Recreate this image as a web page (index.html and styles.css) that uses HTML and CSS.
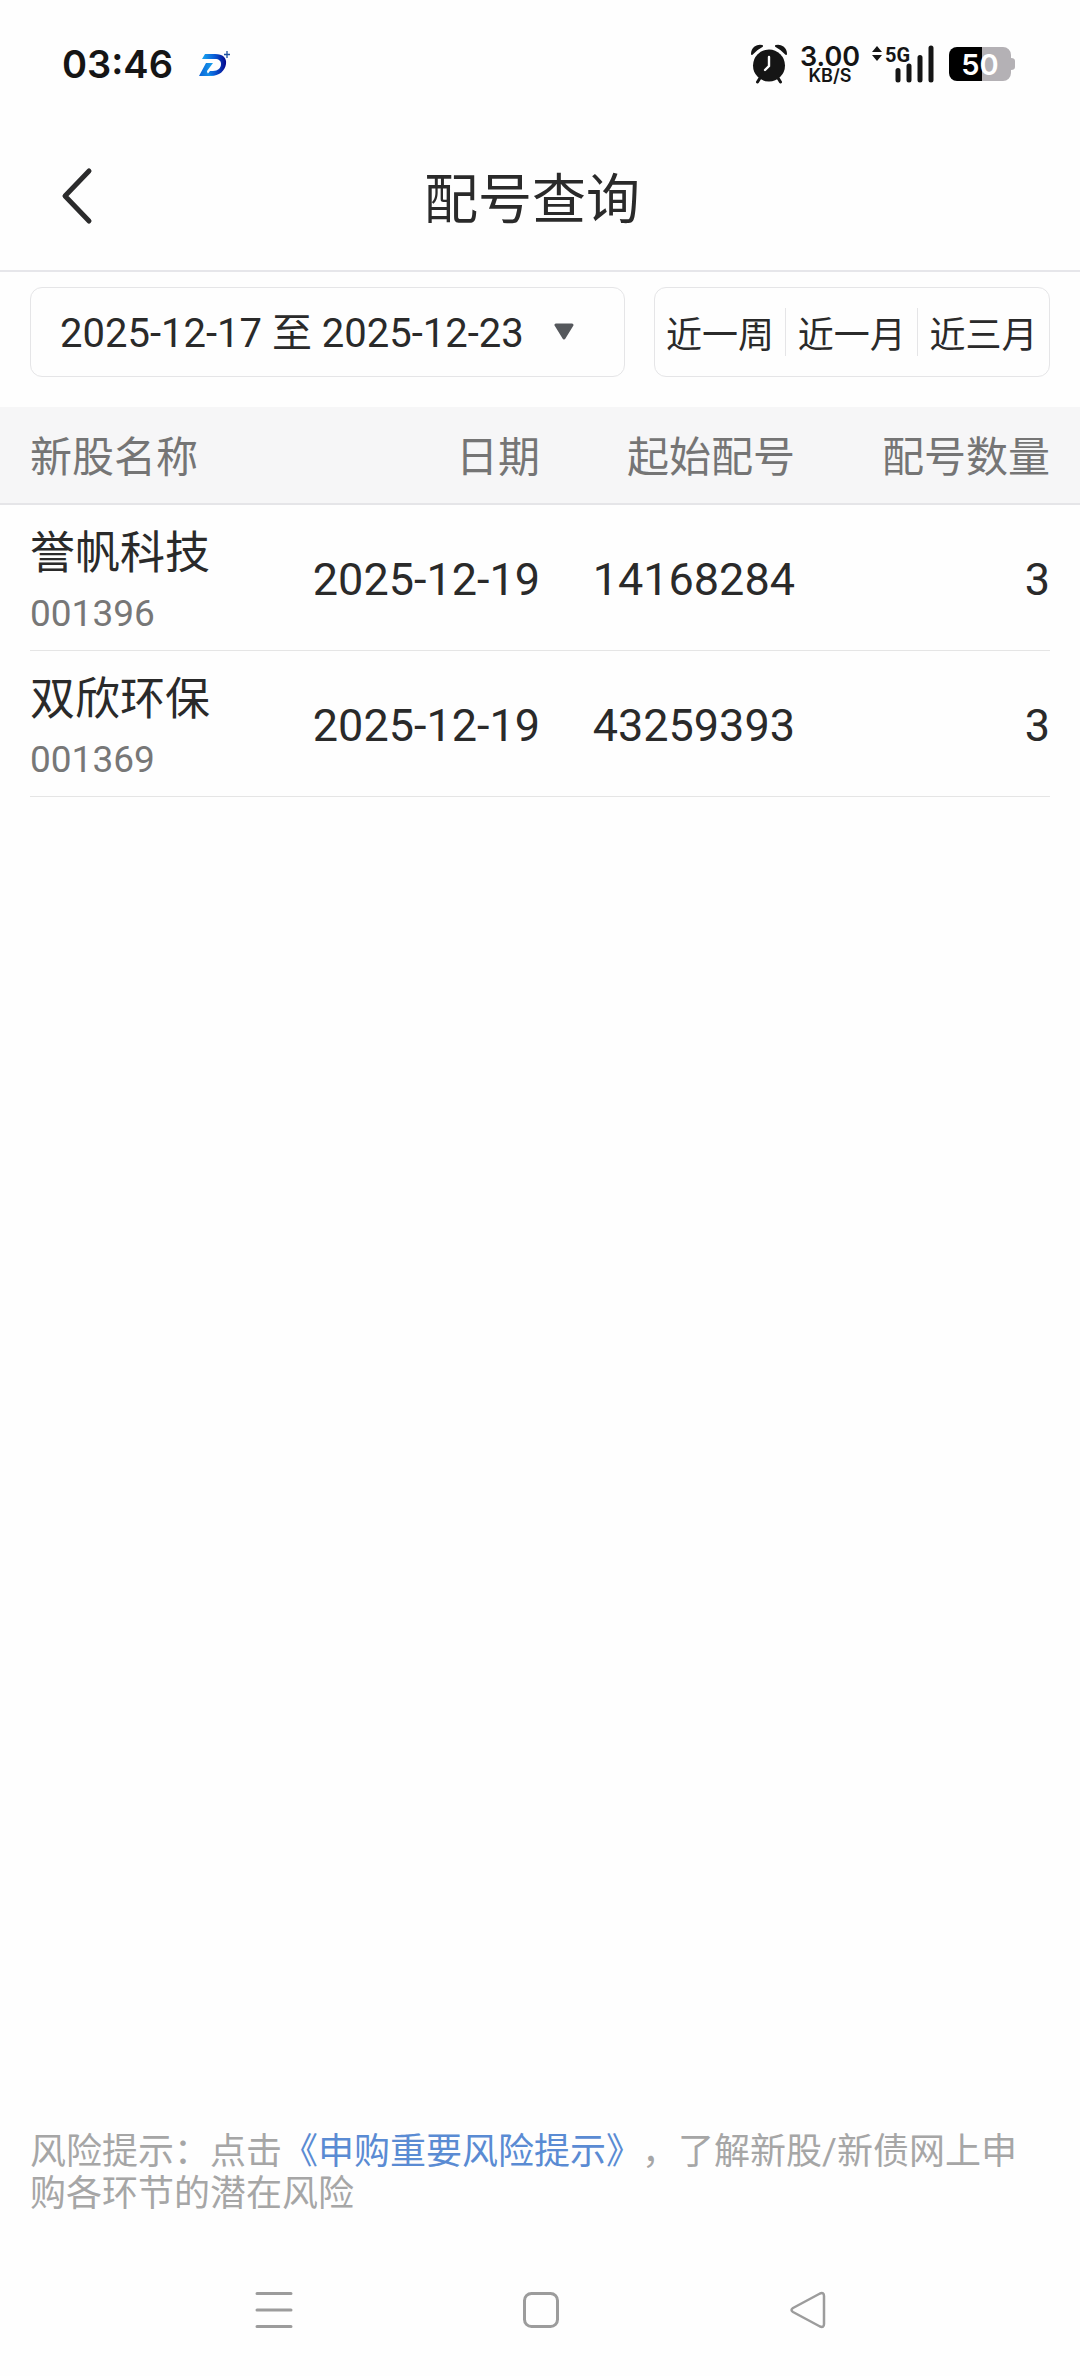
FILE: index.html
```html
<!DOCTYPE html>
<html lang="zh-CN">
<head>
<meta charset="utf-8">
<meta name="viewport" content="width=device-width, initial-scale=1">
<title>配号查询</title>
<link rel="stylesheet" href="styles.css">
</head>
<body>
<div class="screen">
  <div class="status">
    <span class="clock">03:46</span>
    <svg class="app-logo" width="34" height="34" viewBox="0 0 34 34" aria-hidden="true">
      <defs>
        <linearGradient id="logo-top" x1="0" x2="1"><stop offset="0" stop-color="#1aa7f0"/><stop offset=".5" stop-color="#0a5fd8"/><stop offset="1" stop-color="#05058c"/></linearGradient>
        <linearGradient id="logo-leg" x1="0" x2="1"><stop offset="0" stop-color="#0b62d8"/><stop offset="1" stop-color="#18a4ee"/></linearGradient>
      </defs>
      <path d="M7 7H17C25 7 29 11 28 17C27 24 21 29 13 29H8L12 24H15C20 24 23 21 23 17C23 14 21 12 17 12H4Z" fill="url(#logo-top)"/>
      <path d="M8 16H15L9 24C9 27 12 28 16 29H1Z" fill="url(#logo-leg)"/>
      <path d="M29 4V11M26 7.500H32" stroke="#1c50a0" stroke-width="1.300"/>
    </svg>
    <div class="status-right">
      <svg width="38" height="40" viewBox="0 0 38 40" aria-hidden="true">
        <circle cx="19" cy="21.500" r="16" fill="#151515"/>
        <path d="M2 10C2 4 7 1 12 2C8 4 5 6 2 10ZM36 10C36 4 31 1 26 2C30 4 33 6 36 10Z" fill="#151515" stroke="#151515" stroke-width="2" stroke-linejoin="round"/>
        <path d="M10 34L7.500 38M28 34L30.500 38" stroke="#151515" stroke-width="3" stroke-linecap="round"/>
        <path d="M19 13V22L15 26" fill="none" stroke="#fefefe" stroke-width="2.400" stroke-linecap="round"/>
      </svg>
      <div class="speed"><span class="speed-value">3.00</span><span class="speed-unit">KB/S</span></div>
      <svg class="signal" width="64" height="40" viewBox="0 0 64 40" role="img" aria-label="5G">
        <path d="M0 8L5 2L10 8ZM0 11L5 17L10 11Z" fill="#151515"/>
        <text x="13" y="18" class="signal-text">5G</text>
        <path d="M26 26.500V36M37 22V36M48 13.500V36M59 4V36" stroke="#151515" stroke-width="5" stroke-linecap="round"/>
      </svg>
      <svg width="68" height="36" viewBox="0 0 68 36" role="img" aria-label="50%">
        <path d="M34 1H55A8 8 0 0 1 63 9V12Q67 12 67 15V21Q67 24 63 24V27A8 8 0 0 1 55 35H34Z" fill="#b4b1b5"/>
        <path d="M34 1H9A8 8 0 0 0 1 9V27A8 8 0 0 0 9 35H34Z" fill="#000"/>
        <text x="32" y="29" text-anchor="middle" class="battery-text">50</text>
      </svg>
    </div>
  </div>

  <header class="header">
    <button class="back" type="button" aria-label="返回">
      <svg width="34" height="60" viewBox="0 0 34 60" aria-hidden="true"><path d="M29 5L5 30L29 55" fill="none" stroke="#2b2b2c" stroke-width="5" stroke-linecap="round" stroke-linejoin="round"/></svg>
    </button>
    <h1 class="title">配号查询</h1>
  </header>

  <main class="main">
    <div class="filters">
      <button class="range" type="button">
        <span class="range-text">2025-12-17 至 2025-12-23</span>
        <svg width="20" height="18" viewBox="0 0 20 18" aria-hidden="true"><path d="M2 2H18L10 15Z" fill="#55585c" stroke="#55585c" stroke-width="3" stroke-linejoin="round"/></svg>
      </button>
      <div class="quick">
        <button class="quick-item" type="button">近一周</button>
        <button class="quick-item" type="button">近一月</button>
        <button class="quick-item" type="button">近三月</button>
      </div>
    </div>

    <div class="table-wrap">
      <table class="table">
        <thead>
          <tr><th>新股名称</th><th>日期</th><th>起始配号</th><th>配号数量</th></tr>
        </thead>
        <tbody>
          <tr><td><span class="name">誉帆科技</span><span class="code">001396</span></td><td>2025-12-19</td><td>14168284</td><td>3</td></tr>
          <tr><td><span class="name">双欣环保</span><span class="code">001369</span></td><td>2025-12-19</td><td>43259393</td><td>3</td></tr>
        </tbody>
      </table>
    </div>
  </main>

  <p class="notice">风险提示：点击<a class="notice-link" href="#risk">《申购重要风险提示》</a>，了解新股/新债网上申购各环节的潜在风险</p>

  <nav class="sysnav">
    <button class="sys" type="button" aria-label="菜单"><svg width="40" height="40" viewBox="0 0 40 40" aria-hidden="true"><path d="M3 3.500H37M3 20H37M3 36.500H37" stroke="#9c9c9c" stroke-width="3" stroke-linecap="round"/></svg></button>
    <button class="sys" type="button" aria-label="主页"><svg width="40" height="40" viewBox="0 0 40 40" aria-hidden="true"><rect x="3.500" y="3.500" width="33" height="33" rx="7" fill="none" stroke="#9c9c9c" stroke-width="3"/></svg></button>
    <button class="sys" type="button" aria-label="后退"><svg width="40" height="40" viewBox="0 0 40 40" aria-hidden="true"><path d="M32 3.500L5 18Q2 20 5 22L32 36.500Q36 38 36 34V6Q36 2 32 3.500Z" fill="none" stroke="#9c9c9c" stroke-width="2.500" stroke-linejoin="round"/></svg></button>
  </nav>
</div>
</body>
</html>
```
FILE: styles.css
```css
* {
  box-sizing: border-box;
}

body {
  margin: 0;
  background: #fefefe;
  color: #2a2a2a;
  font-family: Roboto, "Noto Sans CJK SC", sans-serif;
}

button {
  margin: 0;
  padding: 0;
  border: 0;
  background: none;
  color: inherit;
  font: inherit;
}

svg {
  display: block;
  flex: none;
}

.screen {
  display: flex;
  flex-direction: column;
  min-height: 100vh;
}

/* Status bar */
.status {
  display: flex;
  align-items: center;
  height: 128px;
  padding: 0 64px 0 62px;
  color: #151515;
  font-family: Inter, sans-serif;
  font-weight: 600;
}

.clock {
  font-size: 38px;
  line-height: 48px;
}

.app-logo {
  margin-left: 25px;
}

.status-right {
  display: flex;
  align-items: center;
  gap: 12px;
  margin-left: auto;
}

.speed {
  display: flex;
  flex-direction: column;
  align-items: center;
}

.speed-value {
  font-size: 27px;
  line-height: 23px;
}

.speed-unit {
  font-size: 18px;
  line-height: 15px;
}

.signal-text {
  font: 700 20px Roboto, sans-serif;
  fill: #151515;
}

.battery-text {
  font: 600 29px Inter, sans-serif;
  fill: #fff;
}

/* Page header */
.header {
  display: grid;
  grid-template-columns: 120px 1fr 136px;
  align-items: center;
  height: 144px;
  border-bottom: 2px solid #e6e6ea;
}

.back {
  display: flex;
  align-items: center;
  height: 100%;
  padding: 0 0 6px 60px;
}

.title {
  margin: 0;
  padding-top: 4px;
  font-size: 54px;
  font-weight: 400;
  line-height: 72px;
  text-align: center;
}

/* Filters */
.main {
  flex: 1;
}

.filters {
  display: grid;
  grid-template-columns: minmax(0, 3fr) minmax(0, 2fr);
  gap: 29px;
  padding: 15px 30px 30px;
}

.range,
.quick {
  display: flex;
  align-items: center;
  height: 90px;
  border: 1px solid #e5e5e7;
  border-radius: 12px;
}

.range {
  gap: 30px;
  padding-left: 29px;
  font-size: 40px;
  white-space: nowrap;
}

.range-text {
  padding-bottom: 4px;
}

.quick-item {
  flex: 1;
  height: 48px;
  padding-top: 8px;
  font-size: 36px;
  line-height: 40px;
  white-space: nowrap;
}

.quick-item + .quick-item {
  border-left: 1px solid #e5e5e7;
}

/* Table */
.table-wrap {
  padding: 0 30px;
  background: linear-gradient(#f6f6f7 96px, #e5e5e8 96px, #e5e5e8 98px, transparent 98px);
}

.table {
  width: 100%;
  border-collapse: separate;
  border-spacing: 0;
  table-layout: fixed;
}

.table th {
  height: 98px;
  padding: 0 0 6px;
  color: #757575;
  font-size: 42px;
  font-weight: 400;
  text-align: right;
}

.table td {
  height: 146px;
  padding: 4px 0 0;
  border-bottom: 1px solid #e5e5e5;
  font-size: 45px;
  text-align: right;
}

.table th:first-child,
.table td:first-child {
  text-align: left;
}

.table td:first-child {
  padding-top: 9px;
}

.name,
.code {
  display: block;
}

.name {
  font-size: 45px;
  line-height: 64px;
}

.code {
  color: #777;
  font-size: 37px;
  line-height: 56px;
}

/* Risk notice */
.notice {
  margin: 0;
  padding: 0 30px 29px;
  color: #a6a6a6;
  font-size: 36px;
  line-height: 42px;
  text-spacing-trim: space-all;
}

.notice-link {
  color: #5a8bd3;
  text-decoration: none;
}

/* System navigation */
.sysnav {
  display: grid;
  grid-template-columns: repeat(3, 1fr);
  height: 132px;
  padding: 0 138px 0 140px;
}

.sys {
  display: flex;
  align-items: center;
  justify-content: center;
}
```
